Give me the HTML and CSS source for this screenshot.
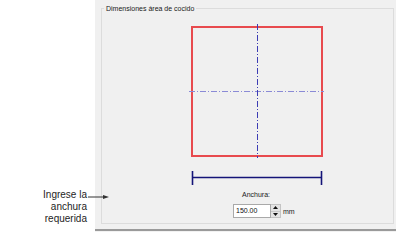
FILE: index.html
```html
<!DOCTYPE html>
<html lang="es">
<head>
<meta charset="utf-8">
<link rel="stylesheet" href="styles.css">
</head>
<body>
<div class="page">
  <div class="note">
    <p class="note-text">Ingrese la<br>anchura<br>requerida</p>
    <svg class="arrow" width="22" height="6" viewBox="0 0 22 6">
      <line x1="0" y1="3" x2="17" y2="3" stroke="#333" stroke-width="1"/>
      <polygon points="15,1 21,3 15,5" fill="#333"/>
    </svg>
  </div>
  <div class="panel">
    <div class="panel-body">
      <fieldset class="group">
        <legend class="group-title">Dimensiones área de cocido</legend>
        <svg class="diagram" width="291" height="176" viewBox="102 13 291 176">
          <rect x="192" y="27" width="130" height="129" fill="none" stroke="#e84a4e" stroke-width="2"/>
          <line x1="189" y1="91.5" x2="324" y2="91.5" stroke="#8a8ad6" stroke-width="1" stroke-dasharray="6 2 1 2"/>
          <line x1="257.5" y1="24" x2="257.5" y2="158" stroke="#3c3cb4" stroke-width="1" stroke-dasharray="6 2 1 2"/>
          <line x1="192" y1="177.5" x2="322" y2="177.5" stroke="#141478" stroke-width="1.6"/>
          <line x1="192.5" y1="171" x2="192.5" y2="185" stroke="#141478" stroke-width="1.6"/>
          <line x1="321.5" y1="171" x2="321.5" y2="185" stroke="#141478" stroke-width="1.6"/>
        </svg>
        <div class="field-label">Anchura:</div>
        <div class="field-row">
          <div class="input">150.00</div>
          <div class="spin">
            <span class="spin-btn"><svg width="5" height="3" viewBox="0 0 5 3"><polygon points="0,3 2.5,0 5,3" fill="#111"/></svg></span>
            <span class="spin-btn"><svg width="5" height="3" viewBox="0 0 5 3"><polygon points="0,0 2.5,3 5,0" fill="#111"/></svg></span>
          </div>
          <span class="unit">mm</span>
        </div>
      </fieldset>
    </div>
    <div class="bar"></div>
    <div class="bar-shadow"></div>
  </div>
</div>
</body>
</html>
```
FILE: styles.css
```css
html, body {
  margin: 0;
  padding: 0;
  background: #ffffff;
}
.page {
  display: flex;
  width: 411px;
  height: 247px;
}
.note {
  position: relative;
  width: 95px;
  flex: none;
}
.note-text {
  margin: 0;
  padding-top: 189px;
  width: 87px;
  text-align: right;
  font-family: "Liberation Sans", Arial, sans-serif;
  font-size: 10px;
  line-height: 12px;
  color: #1e1e1e;
}
.arrow {
  position: absolute;
  left: 88px;
  top: 194px;
  display: block;
}
.panel {
  width: 301px;
  flex: none;
  display: flex;
  flex-direction: column;
}
.panel-body {
  height: 229px;
  background: #f0f0f0;
  padding: 4px 0 0 6px;
  box-sizing: border-box;
}
.group {
  margin: 0;
  padding: 0;
  width: 293px;
  height: 220px;
  box-sizing: border-box;
  border: 1px solid #dcdcdc;
  font-family: "Liberation Sans", Arial, sans-serif;
  font-size: 7px;
  color: #222;
}
.group-title {
  margin-left: 2px;
  padding: 0 2px;
  line-height: 9px;
  font-size: 7px;
  color: #202020;
}
.diagram {
  display: block;
}
.field-label {
  padding-left: 140px;
  line-height: 11px;
  height: 11px;
  color: #202020;
}
.field-row {
  display: flex;
  align-items: center;
  margin-top: 4px;
  padding-left: 131px;
}
.input {
  width: 38px;
  height: 14px;
  box-sizing: border-box;
  border: 1px solid #a9a9a9;
  background: #ffffff;
  padding-left: 2px;
  line-height: 12px;
  color: #111;
}
.spin {
  width: 10px;
  height: 14px;
  box-sizing: border-box;
  display: flex;
  flex-direction: column;
  border: 1px solid #c4c4c4;
  border-left: none;
  background: #e4e4e4;
}
.spin-btn {
  flex: 1;
  display: flex;
  align-items: center;
  justify-content: center;
}
.spin-btn + .spin-btn {
  border-top: 1px solid #c8c8c8;
}
.spin-btn svg {
  display: block;
}
.unit {
  margin-left: 2px;
  color: #202020;
}
.bar {
  height: 2px;
  background: #9a9a9a;
}
.bar-shadow {
  height: 1px;
  background: #f2f2f2;
}
```
